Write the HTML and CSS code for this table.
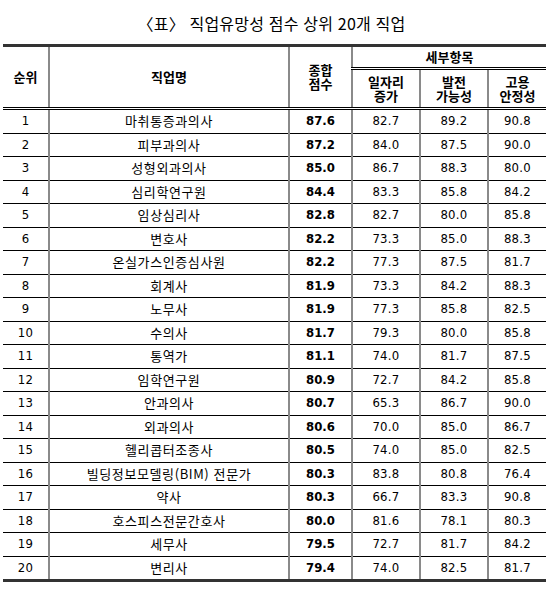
FILE: index.html
```html
<!DOCTYPE html>
<html lang="ko">
<head>
<meta charset="utf-8">
<link rel="stylesheet" href="styles.css">
</head>
<body>
<div class="page">
  <h1 class="title">〈표〉 직업유망성 점수 상위 20개 직업</h1>
  <table class="tbl">
    <colgroup>
      <col class="c-rank"><col class="c-name"><col class="c-total"><col class="c-a"><col class="c-b"><col class="c-c">
    </colgroup>
    <thead>
      <tr class="h1">
        <th rowspan="2" class="first">순위</th>
        <th rowspan="2">직업명</th>
        <th rowspan="2"><span class="ln">종합</span><span class="ln">점수</span></th>
        <th colspan="3" class="group">세부항목</th>
      </tr>
      <tr class="h2">
        <th><span class="ln">일자리</span><span class="ln">증가</span></th>
        <th><span class="ln">발전</span><span class="ln">가능성</span></th>
        <th><span class="ln">고용</span><span class="ln">안정성</span></th>
      </tr>
    </thead>
    <tbody>
      <tr><td class="first">1</td><td class="name">마취통증과의사</td><td class="b">87.6</td><td class="n">82.7</td><td class="n">89.2</td><td class="n">90.8</td></tr>
      <tr><td class="first">2</td><td class="name">피부과의사</td><td class="b">87.2</td><td class="n">84.0</td><td class="n">87.5</td><td class="n">90.0</td></tr>
      <tr><td class="first">3</td><td class="name">성형외과의사</td><td class="b">85.0</td><td class="n">86.7</td><td class="n">88.3</td><td class="n">80.0</td></tr>
      <tr><td class="first">4</td><td class="name">심리학연구원</td><td class="b">84.4</td><td class="n">83.3</td><td class="n">85.8</td><td class="n">84.2</td></tr>
      <tr><td class="first">5</td><td class="name">임상심리사</td><td class="b">82.8</td><td class="n">82.7</td><td class="n">80.0</td><td class="n">85.8</td></tr>
      <tr><td class="first">6</td><td class="name">변호사</td><td class="b">82.2</td><td class="n">73.3</td><td class="n">85.0</td><td class="n">88.3</td></tr>
      <tr><td class="first">7</td><td class="name">온실가스인증심사원</td><td class="b">82.2</td><td class="n">77.3</td><td class="n">87.5</td><td class="n">81.7</td></tr>
      <tr><td class="first">8</td><td class="name">회계사</td><td class="b">81.9</td><td class="n">73.3</td><td class="n">84.2</td><td class="n">88.3</td></tr>
      <tr><td class="first">9</td><td class="name">노무사</td><td class="b">81.9</td><td class="n">77.3</td><td class="n">85.8</td><td class="n">82.5</td></tr>
      <tr><td class="first">10</td><td class="name">수의사</td><td class="b">81.7</td><td class="n">79.3</td><td class="n">80.0</td><td class="n">85.8</td></tr>
      <tr><td class="first">11</td><td class="name">통역가</td><td class="b">81.1</td><td class="n">74.0</td><td class="n">81.7</td><td class="n">87.5</td></tr>
      <tr><td class="first">12</td><td class="name">임학연구원</td><td class="b">80.9</td><td class="n">72.7</td><td class="n">84.2</td><td class="n">85.8</td></tr>
      <tr><td class="first">13</td><td class="name">안과의사</td><td class="b">80.7</td><td class="n">65.3</td><td class="n">86.7</td><td class="n">90.0</td></tr>
      <tr><td class="first">14</td><td class="name">외과의사</td><td class="b">80.6</td><td class="n">70.0</td><td class="n">85.0</td><td class="n">86.7</td></tr>
      <tr><td class="first">15</td><td class="name">헬리콥터조종사</td><td class="b">80.5</td><td class="n">74.0</td><td class="n">85.0</td><td class="n">82.5</td></tr>
      <tr><td class="first">16</td><td class="name">빌딩정보모델링(BIM) 전문가</td><td class="b">80.3</td><td class="n">83.8</td><td class="n">80.8</td><td class="n">76.4</td></tr>
      <tr><td class="first">17</td><td class="name">약사</td><td class="b">80.3</td><td class="n">66.7</td><td class="n">83.3</td><td class="n">90.8</td></tr>
      <tr><td class="first">18</td><td class="name">호스피스전문간호사</td><td class="b">80.0</td><td class="n">81.6</td><td class="n">78.1</td><td class="n">80.3</td></tr>
      <tr><td class="first">19</td><td class="name">세무사</td><td class="b">79.5</td><td class="n">72.7</td><td class="n">81.7</td><td class="n">84.2</td></tr>
      <tr><td class="first">20</td><td class="name">변리사</td><td class="b">79.4</td><td class="n">74.0</td><td class="n">82.5</td><td class="n">81.7</td></tr>
    </tbody>
  </table>
</div>
</body>
</html>
```

FILE: styles.css
```css
html, body {
  margin: 0;
  padding: 0;
  background: #fff;
}
body {
  font-family: "Noto Sans CJK KR", "Noto Sans", sans-serif;
  color: #000;
}
.page {
  padding: 12px 4px 0 3px;
}
.title {
  margin: 0 0 9px 0;
  text-align: center;
  font-size: 16px;
  font-weight: normal;
  line-height: 23px;
  letter-spacing: 0.2px;
  padding-right: 6px;
}
.tbl {
  width: 543px;
  border-collapse: collapse;
  table-layout: fixed;
  border-top: 3px solid #333;
  border-bottom: 3px solid #333;
}
.c-rank { width: 46px; }
.c-name { width: 240px; }
.c-total { width: 63px; }
.c-a { width: 68px; }
.c-b { width: 68px; }
.c-c { width: 58px; }
th, td {
  padding: 0;
  text-align: center;
  border-left: 2px solid #8a8a8a;
  border-top: 1px solid #000;
}
th.first, td.first { border-left: none; }
th {
  font-size: 13px;
  font-weight: bold;
  line-height: 14px;
}
.ln {
  display: block;
  height: 14px;
  line-height: 14px;
}
.h1 th { border-top: none; }
.h1 th.group { height: 20px; border-bottom: 3px double #000; }
.h2 th { height: 36px; border-top: 3px double #000; padding-top: 1px; }
thead tr.h2 th { border-bottom: 3px double #000; }
thead tr.h1 th[rowspan] { border-bottom: 3px double #000; }
tbody tr:first-child td { border-top: 3px double #000; }
td {
  height: 22.5px;
  font-size: 13px;
  line-height: 14px;
}
td.name { letter-spacing: 0.6px; }
td.first, td.n, td.b {
  font-family: "DejaVu Sans Condensed", "Noto Sans CJK KR", sans-serif;
  font-stretch: condensed;
  font-size: 13px;
  letter-spacing: 0.3px;
}
td.b { font-weight: bold; letter-spacing: 0; }
```
